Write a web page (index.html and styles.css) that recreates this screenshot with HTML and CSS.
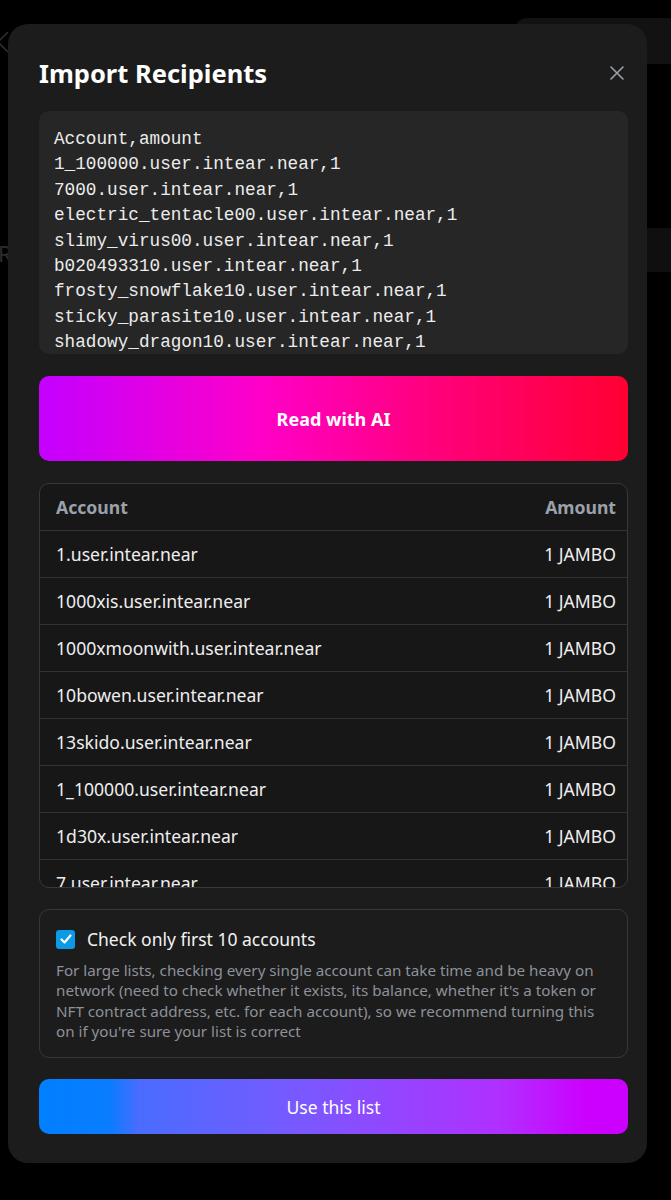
FILE: index.html
```html
<!DOCTYPE html>
<html lang="en">
<head>
<meta charset="utf-8">
<title>Import Recipients</title>
<link rel="stylesheet" href="styles.css">
</head>
<body>
<div class="page-bg">
  <svg class="bg-back" width="14" height="24" viewBox="0 0 14 24"><path d="M12 2 L2 12 L12 22" stroke="#2c2c2c" stroke-width="1.6" fill="none"/></svg>
  <div class="bg-r">R</div>
  <div class="bg-pill"></div>
  <div class="bg-panel"></div>
</div>
<div class="modal">
  <div class="modal-head">
    <h2 class="title">Import Recipients</h2>
    <button class="close" aria-label="Close">
      <svg width="16" height="16" viewBox="0 0 16 16"><path d="M2 2 L14 14 M14 2 L2 14" stroke="#9aa2ad" stroke-width="1.6" stroke-linecap="round" fill="none"/></svg>
    </button>
  </div>
  <div class="csv">Account,amount
1_100000.user.intear.near,1
7000.user.intear.near,1
electric_tentacle00.user.intear.near,1
slimy_virus00.user.intear.near,1
b020493310.user.intear.near,1
frosty_snowflake10.user.intear.near,1
sticky_parasite10.user.intear.near,1
shadowy_dragon10.user.intear.near,1
mighty_wizard10.user.intear.near,1</div>
  <button class="btn btn-ai">Read with AI</button>
  <div class="table-wrap">
    <div class="row head"><span>Account</span><span>Amount</span></div>
    <div class="row"><span>1.user.intear.near</span><span>1 JAMBO</span></div>
    <div class="row"><span>1000xis.user.intear.near</span><span>1 JAMBO</span></div>
    <div class="row"><span>1000xmoonwith.user.intear.near</span><span>1 JAMBO</span></div>
    <div class="row"><span>10bowen.user.intear.near</span><span>1 JAMBO</span></div>
    <div class="row"><span>13skido.user.intear.near</span><span>1 JAMBO</span></div>
    <div class="row"><span>1_100000.user.intear.near</span><span>1 JAMBO</span></div>
    <div class="row"><span>1d30x.user.intear.near</span><span>1 JAMBO</span></div>
    <div class="row"><span>7.user.intear.near</span><span>1 JAMBO</span></div>
    <div class="row"><span>7000.user.intear.near</span><span>1 JAMBO</span></div>
  </div>
  <div class="check-box">
    <label class="check-line">
      <span class="cb"><svg width="14" height="14" viewBox="0 0 14 14"><path d="M2.5 7.5 L5.5 10.5 L11.5 3.5" stroke="#fff" stroke-width="2.2" fill="none" stroke-linecap="round" stroke-linejoin="round"/></svg></span>
      <span class="check-label">Check only first 10 accounts</span>
    </label>
    <p class="desc">For large lists, checking every single account can take time and be heavy on network (need to check whether it exists, its balance, whether it's a token or NFT contract address, etc. for each account), so we recommend turning this on if you're sure your list is correct</p>
  </div>
  <button class="btn btn-use">Use this list</button>
</div>
</body>
</html>
```
FILE: styles.css
```css
* { box-sizing: border-box; }
html, body { margin: 0; padding: 0; }
body {
  background: #000;
  width: 671px;
  height: 1200px;
  overflow: hidden;
  position: relative;
  font-family: "Noto Sans", "Open Sans", sans-serif;
  color: #f2f2f2;
}
.page-bg { position: absolute; inset: 0; }
.bg-back { position: absolute; left: -4px; top: 30px; }
.bg-r { position: absolute; left: -2px; top: 238px; font-size: 22px; color: #2c2c2c; }
.bg-pill { position: absolute; left: 515px; top: 18px; width: 180px; height: 46px; border-radius: 12px; background: #121212; }
.bg-panel { position: absolute; left: 600px; top: 228px; width: 100px; height: 44px; border-radius: 10px; background: #0f0f0f; }

.modal {
  position: relative;
  margin: 24px 0 0 8px;
  width: 639px;
  height: 1139px;
  background: #1c1c1c;
  border-radius: 20px;
  padding: 32px 19px 29px 31px;
  display: flex;
  flex-direction: column;
  gap: 22px;
}
.modal-head {
  display: flex;
  align-items: center;
  justify-content: space-between;
  height: 33px;
}
.title {
  margin: 0;
  font-size: 25.5px;
  font-weight: 700;
  color: #fff;
  line-height: 32px;
}
.close {
  background: none;
  border: 0;
  padding: 0;
  width: 16px;
  height: 16px;
  margin-right: 3px;
  display: flex;
}
.csv {
  height: 243px;
  overflow: hidden;
  background: #262626;
  border-radius: 10px;
  padding: 16px 15px 0 15px;
  white-space: pre;
  font-family: "Liberation Mono", "DejaVu Sans Mono", monospace;
  font-size: 17.7px;
  line-height: 25.4px;
  color: #ececec;
  flex: none;
}
.btn {
  border: 0;
  border-radius: 10px;
  color: #fff;
  font-family: "Noto Sans", sans-serif;
  width: 100%;
  flex: none;
}
.btn-ai {
  height: 85px;
  font-size: 18px;
  font-weight: 700;
  background: linear-gradient(90deg, #c400ff 0%, #d000f4 8%, #ff00c8 38%, #ff0080 65%, #ff0033 100%);
}
.table-wrap {
  height: 405px;
  overflow: hidden;
  border: 1px solid #383838;
  border-radius: 10px;
  background: #171717;
  flex: none;
}
.row {
  display: flex;
  justify-content: space-between;
  align-items: center;
  height: 47px;
  padding: 0 11px 0 16px;
  font-size: 17.6px;
  color: #eeeeee;
  border-top: 1px solid #333;
}
.row.head {
  border-top: 0;
  height: 46px;
  font-weight: 700;
  color: #9aa1aa;
}
.check-box {
  flex: none;
  height: 149px;
  margin-top: -1px;
  border: 1px solid #383838;
  border-radius: 10px;
  padding: 16px 16px 16px 16px;
}
.check-line {
  display: flex;
  align-items: center;
  gap: 12px;
  height: 26px;
}
.cb {
  width: 19px;
  height: 19px;
  border-radius: 3px;
  background: #0a9ae6;
  display: flex;
  align-items: center;
  justify-content: center;
  flex: none;
}
.check-label {
  font-size: 17.5px;
  line-height: 26px;
  color: #f2f2f2;
}
.desc {
  margin: 8px 0 0 0;
  font-size: 15.2px;
  line-height: 20.3px;
  color: #8d9199;
}
.btn-use {
  height: 55px;
  margin-top: -1px;
  font-size: 17.5px;
  font-weight: 400;
  background: linear-gradient(90deg, #0080ff 0%, #0a7cff 12%, #4a6cff 17%, #7a58ff 45%, #b030ff 78%, #cc00ff 93%, #cc00ff 100%);
}
```
